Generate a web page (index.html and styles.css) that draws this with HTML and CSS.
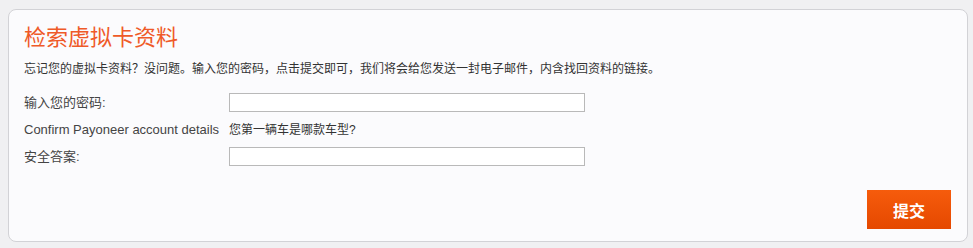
FILE: index.html
```html
<!DOCTYPE html>
<html lang="zh-CN">
<head>
<meta charset="utf-8">
<title>检索虚拟卡资料</title>
<link rel="stylesheet" href="styles.css">
</head>
<body>
<div class="card">
  <h1 class="title">检索虚拟卡资料</h1>
  <p class="desc">忘记您的虚拟卡资料？没问题。输入您的密码，点击提交即可，我们将会给您发送一封电子邮件，内含找回资料的链接。</p>
  <div class="form">
    <label class="label" for="pw">输入您的密码:</label>
    <div class="field"><input class="input" id="pw" type="password"></div>
    <div class="label">Confirm Payoneer account details</div>
    <div class="field question">您第一辆车是哪款车型?</div>
    <label class="label" for="ans">安全答案:</label>
    <div class="field"><input class="input" id="ans" type="text"></div>
  </div>
  <div class="actions">
    <button class="submit" type="button">提交</button>
  </div>
</div>
</body>
</html>
```

FILE: styles.css
```css
html, body {
  margin: 0;
  padding: 0;
  background: #f0f0f2;
  font-family: "Liberation Sans", "Noto Sans CJK SC", sans-serif;
  color: #333;
}

.card {
  box-sizing: border-box;
  margin: 9px 0 0 8px;
  width: 960px;
  height: 233px;
  padding: 13px 16px 12px 15px;
  background: #fbfbfd;
  border: 1px solid #d2d2d6;
  border-radius: 8px;
}

.title {
  margin: 0;
  font-size: 22px;
  line-height: 30px;
  font-weight: normal;
  color: #ef5a28;
}

.desc {
  margin: 7px 0 0;
  font-size: 12px;
  line-height: 18px;
  color: #333;
}

.form {
  margin-top: 11px;
  display: grid;
  grid-template-columns: 205px 356px;
  grid-auto-rows: 27px;
  align-items: center;
}

.label {
  font-size: 13px;
  line-height: 18px;
  color: #444;
  white-space: nowrap;
}

.field {
  display: flex;
  align-items: center;
}

.question {
  font-size: 12px;
  line-height: 18px;
  color: #333;
}

.input {
  box-sizing: border-box;
  width: 356px;
  height: 19px;
  margin: 0;
  padding: 0 3px;
  border: 1px solid #b9b9b9;
  background: #fff;
  font-size: 12px;
  outline: none;
}

.actions {
  margin-top: 20px;
  display: flex;
  justify-content: flex-end;
}

.submit {
  width: 84px;
  height: 39px;
  border: none;
  margin: 0;
  padding: 0;
  background: linear-gradient(#f65c0c, #e54800);
  color: #fff;
  font-family: "Noto Sans CJK SC", sans-serif;
  font-size: 16px;
  font-weight: bold;
  cursor: pointer;
}
```
